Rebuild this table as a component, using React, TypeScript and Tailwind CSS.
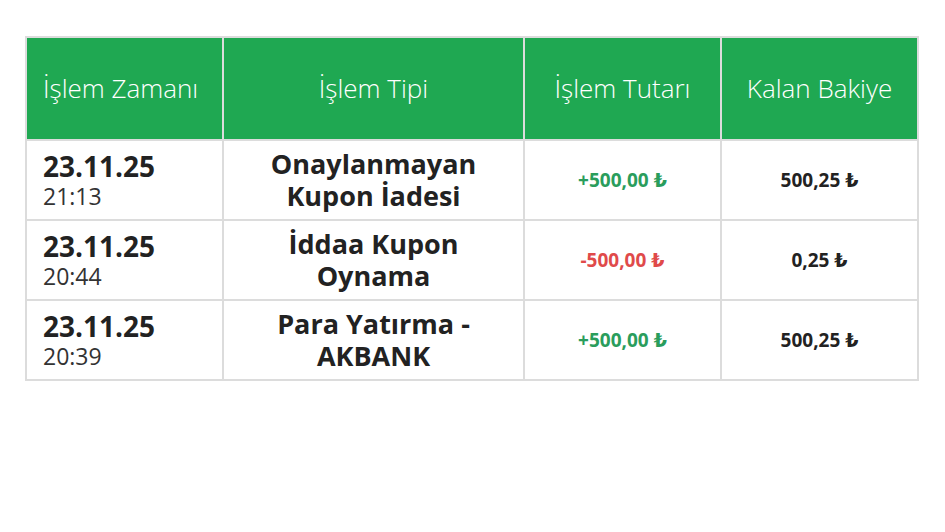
import React from 'react';

interface Row {
  date: string;
  time: string;
  type: [string, string];
  amount: string;
  positive: boolean;
  balance: string;
}

const rows: Row[] = [
  { date: '23.11.25', time: '21:13', type: ['Onaylanmayan', 'Kupon İadesi'], amount: '+500,00 ₺', positive: true, balance: '500,25 ₺' },
  { date: '23.11.25', time: '20:44', type: ['İddaa Kupon', 'Oynama'], amount: '-500,00 ₺', positive: false, balance: '0,25 ₺' },
  { date: '23.11.25', time: '20:39', type: ['Para Yatırma -', 'AKBANK'], amount: '+500,00 ₺', positive: true, balance: '500,25 ₺' },
];

const cell = 'border-2 border-[#dcdcdc]';

const App: React.FC = () => {
  return (
    <div className="w-[945px] h-[532px] bg-white pt-[36px] pl-[25px]" style={{ fontFamily: '"Open Sans", "DejaVu Sans", sans-serif' }}>
      <table className="w-[892px] border-collapse table-fixed">
        <colgroup>
          <col className="w-[197px]" />
          <col className="w-[301px]" />
          <col className="w-[197px]" />
          <col className="w-[197px]" />
        </colgroup>
        <thead>
          <tr className="h-[103px] bg-[#1fa852] text-white text-[26px]">
            <th className={`${cell} text-left pl-[16px] font-light`}>İşlem Zamanı</th>
            <th className={`${cell} font-light`}>İşlem Tipi</th>
            <th className={`${cell} font-light`}>İşlem Tutarı</th>
            <th className={`${cell} font-light`}>Kalan Bakiye</th>
          </tr>
        </thead>
        <tbody>
          {rows.map((r, i) => (
            <tr key={i} className="h-[80px] text-[#222]">
              <td className={`${cell} pl-[16px]`}>
                <div className="text-[28px] font-bold leading-[32px]">{r.date}</div>
                <div className="text-[23px] leading-[28px] text-[#333]">{r.time}</div>
              </td>
              <td className={`${cell} text-center text-[27px] font-bold leading-[32px]`}>
                <div>{r.type[0]}</div>
                <div>{r.type[1]}</div>
              </td>
              <td
                className={`${cell} text-center text-[19px] font-bold ${r.positive ? 'text-[#2a9d5c]' : 'text-[#e04a4a]'}`}
              >
                {r.amount}
              </td>
              <td className={`${cell} text-center text-[19px] font-bold`}>{r.balance}</td>
            </tr>
          ))}
        </tbody>
      </table>
    </div>
  );
};

export default App;
